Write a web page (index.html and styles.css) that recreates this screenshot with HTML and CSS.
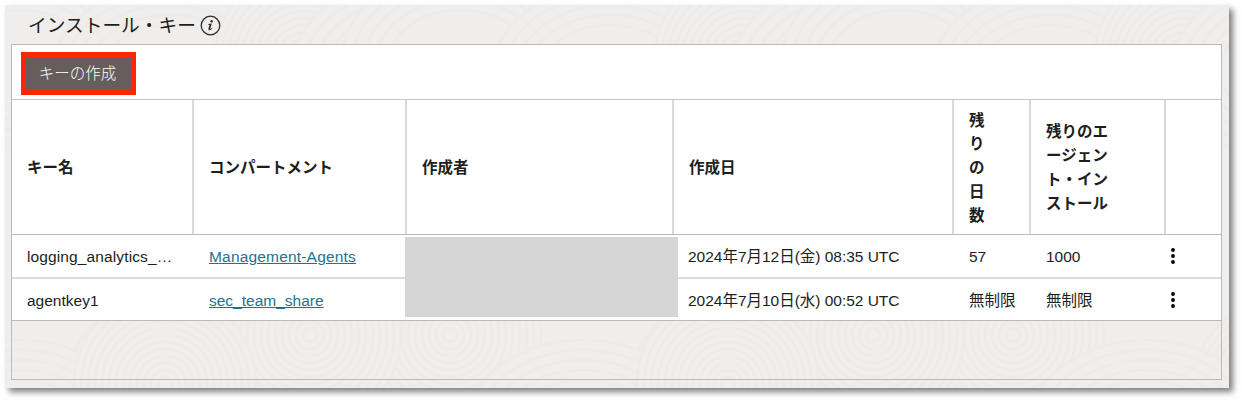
FILE: index.html
```
<!DOCTYPE html>
<html lang="ja">
<head>
<meta charset="utf-8">
<title>インストール・キー</title>
<link rel="stylesheet" href="styles.css">
</head>
<body>
<main class="panel">
  <svg class="texture" width="1224" height="383" viewBox="5 5 1224 383" aria-hidden="true">
    <defs>
      <g id="fan">
        <circle r="91"/><circle r="84"/><circle r="77"/><circle r="70"/><circle r="63"/><circle r="56"/><circle r="49"/><circle r="42"/><circle r="35"/><circle r="28"/><circle r="21"/><circle r="14"/><circle r="7"/>
      </g>
      <g id="hill">
        <ellipse rx="118" ry="90"/><ellipse rx="107" ry="80"/><ellipse rx="95" ry="70"/><ellipse rx="83" ry="60"/><ellipse rx="70" ry="50"/>
      </g>
      <g id="tile">
        <use href="#fan" x="240" y="335"/>
        <use href="#fan" x="450" y="335"/>
        <use href="#fan" x="310" y="335"/>
        <use href="#fan" x="165" y="384"/>
        <use href="#fan" x="720" y="390"/>
        <use href="#hill" x="583" y="430"/>
      </g>
      <g id="crest">
        <use href="#hill" x="0" y="60"/>
        <use href="#hill" x="150" y="75"/>
        <use href="#fan" x="285" y="60"/>
        <use href="#hill" x="390" y="70"/>
      </g>
    </defs>
    <use href="#crest" x="20"/>
    <use href="#crest" x="460"/>
    <use href="#crest" x="900"/>
    <use href="#tile" x="-563"/>
    <use href="#tile"/>
    <use href="#tile" x="563"/>
  </svg>
  <header class="heading">
    <h1 class="title">インストール・キー</h1>
    <svg class="info" width="21" height="21" viewBox="0 0 21 21" role="img">
      <circle cx="10.5" cy="10.5" r="9.3" fill="none" stroke="#302d2a" stroke-width="1.3"/>
      <circle cx="11.6" cy="6.3" r="1.25"/>
      <path d="M8.2 9.1 11.8 8.5 10.4 13.4Q10.2 14.1 10.7 13.9 11.3 13.6 12 12.7L12.4 13Q11 15.2 9.5 15.2 7.9 15.1 8.5 13.2L9.5 9.9 8.1 9.6Z"/>
    </svg>
  </header>
  <section class="box">
    <div class="toolbar"><button class="create">キーの作成</button></div>
    <div class="row head">
      <div class="cell">キー名</div>
      <div class="cell">コンパートメント</div>
      <div class="cell">作成者</div>
      <div class="cell">作成日</div>
      <div class="cell">残<br>り<br>の<br>日<br>数</div>
      <div class="cell">残りのエ<br>ージェン<br>ト・イン<br>ストール</div>
      <div class="cell"></div>
    </div>
    <div class="body">
      <div class="row data">
        <div class="cell name">logging_analytics_…</div>
        <div class="cell"><a class="link agents">Management-Agents</a></div>
        <div class="cell"></div>
        <div class="cell date">2024年7月12日(金) 08:35 UTC</div>
        <div class="cell">57</div>
        <div class="cell">1000</div>
        <div class="cell menu"><svg width="6" height="18" viewBox="0 0 6 18"><circle cx="3" cy="3" r="1.9"/><circle cx="3" cy="9" r="1.9"/><circle cx="3" cy="15" r="1.9"/></svg></div>
      </div>
      <div class="row data">
        <div class="cell">agentkey1</div>
        <div class="cell"><a class="link">sec_team_share</a></div>
        <div class="cell"></div>
        <div class="cell date">2024年7月10日(水) 00:52 UTC</div>
        <div class="cell">無制限</div>
        <div class="cell">無制限</div>
        <div class="cell menu"><svg width="6" height="18" viewBox="0 0 6 18"><circle cx="3" cy="3" r="1.9"/><circle cx="3" cy="9" r="1.9"/><circle cx="3" cy="15" r="1.9"/></svg></div>
      </div>
      <div class="mask"></div>
    </div>
  </section>
</main>
</body>
</html>
```
FILE: styles.css
```
* { box-sizing: border-box; }

body {
  margin: 0;
  padding: 5px;
  height: 402px;
  overflow: hidden;
  background: #fff;
  color: #201e1c;
  font: 15.5px/23.8px "Liberation Sans", "Noto Sans CJK JP", sans-serif;
}

.panel {
  position: relative;
  isolation: isolate;
  width: 1224px;
  height: 383px;
  padding: 0 7px 8px 6px;
  background: #efeeec;
  box-shadow: 4px 4px 6px rgba(0, 0, 0, .5);
  display: flex;
  flex-direction: column;
}

.texture {
  position: absolute;
  inset: 0;
  z-index: -1;
  fill: #efeeec;
  stroke: #ecebe9;
  stroke-width: 2.5;
}

.heading {
  height: 39px;
  padding: 2px 0 0 17px;
  display: flex;
  align-items: center;
  gap: 4px;
}

.title {
  margin: 0;
  font-size: 18.7px;
  font-weight: 400;
}

.info { fill: #302d2a; }

.box {
  flex: 1;
  border: 1px solid #bdb9b6;
}

.toolbar {
  height: 55px;
  padding: 7px 9px;
  background: #fff;
  border-bottom: 1px solid #c9c4c1;
}

.create {
  display: block;
  width: 115px;
  height: 43px;
  padding: 0 2px 3px 0;
  border: 5px solid #ff2600;
  background: #665e5a;
  color: #fff;
  font: 15.5px/24px "Noto Sans CJK JP", sans-serif;
  font-weight: 300;
}

.row {
  display: grid;
  grid-template-columns: 182px 213px 267px 280px 77px 135px 1fr;
  background: #fff;
}

.head {
  height: 135px;
  font-weight: 700;
  border-bottom: 1px solid #bdb9b6;
}

.cell {
  display: flex;
  align-items: center;
  padding: 2px 0 0 15px;
  white-space: nowrap;
}

.head .cell { border-right: 2px solid #dcd8d5; }
.head .cell:last-child { border-right: 0; }

.body { position: relative; }

.data { height: 44px; border-bottom: 2px solid #dedad7; }
.data + .data { height: 42px; border-bottom: 1px solid #bdb9b6; }

.name { letter-spacing: .12px; }
.link { color: #1d7292; text-decoration: underline; }
.agents { letter-spacing: .18px; }
.date { letter-spacing: -.02px; padding-left: 14px; }

.menu { padding: 0 0 0 4px; }

.mask {
  position: absolute;
  left: 393px;
  top: 2px;
  width: 273px;
  height: 80px;
  background: #d6d6d6;
}
```
